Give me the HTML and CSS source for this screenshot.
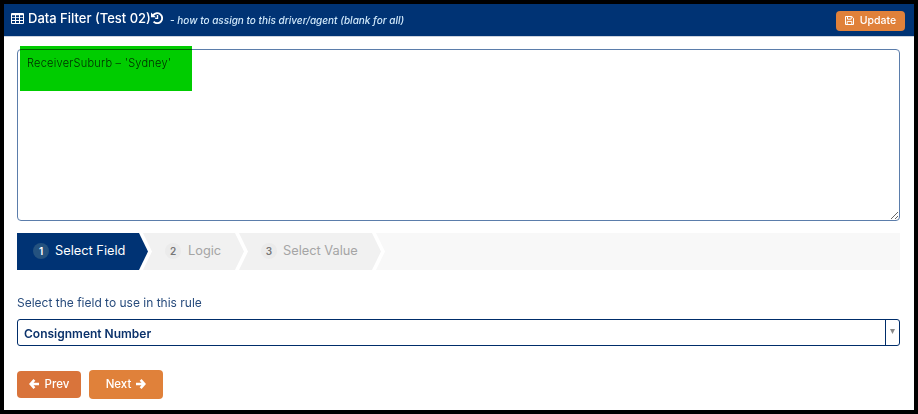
FILE: index.html
```html
<!DOCTYPE html>
<html lang="en">
<head>
<meta charset="utf-8">
<title>Data Filter</title>
<link rel="stylesheet" href="styles.css">
</head>
<body>
<main class="panel">
  <header class="bar">
    <svg class="icon-table" viewBox="0 0 13 11"><path fill="#fff" fill-rule="evenodd" d="M1 0h11a1 1 0 0 1 1 1v9a1 1 0 0 1-1 1H1a1 1 0 0 1-1-1V1a1 1 0 0 1 1-1zM1 2.2v2h3v-2zM5 2.2v2h3v-2zM9 2.2v2h3v-2zM1 5.1v2h3v-2zM5 5.1v2h3v-2zM9 5.1v2h3v-2zM1 8v2h3V8zM5 8v2h3V8zM9 8v2h3V8z"/></svg>
    <h1 class="title">Data Filter (Test 02)</h1>
    <svg class="icon-history" viewBox="0 0 12 12" fill="none" stroke="#fff"><path stroke-width="1.9" d="M2.2 3.1A5 5 0 1 1 2.6 9.7"/><path fill="#fff" stroke="none" d="M0 .5V5.2h4.9z"/><path stroke-width="1.4" d="M6.5 3v3.4H4.2"/></svg>
    <span class="hint">- how to assign to this driver/agent (blank for all)</span>
    <button class="btn update"><svg class="icon-save" viewBox="0 0 9 9" fill="none" stroke="#fff"><path d="M.5.5h6.3l1.7 1.7v6.3h-8z"/><path d="M2.5.5v2.7h3.7V.5M2.2 8.5V5.4h4.6v3.1"/></svg><span>Update</span></button>
  </header>
  <div class="content">
    <div class="editor">
      <textarea class="rule" spellcheck="false">ReceiverSuburb – 'Sydney'</textarea>
      <div class="mark"></div>
    </div>
    <ol class="steps">
      <li class="step active"><b class="num">1</b><span>Select Field</span></li>
      <li class="step logic"><b class="num">2</b><span>Logic</span></li>
      <li class="step value"><b class="num">3</b><span>Select Value</span></li>
    </ol>
    <div class="label">Select the field to use in this rule</div>
    <div class="select"><span class="chosen">Consignment Number</span><span class="toggle"><i class="caret"></i></span></div>
    <div class="actions">
      <button class="btn prev"><svg class="arrow" viewBox="0 0 10 10" fill="none" stroke="#fff" stroke-width="2.6"><path d="M5.4.9 1.7 5l3.7 4.1M1.8 5H10"/></svg><span>Prev</span></button>
      <button class="btn next"><span>Next</span><svg class="arrow" viewBox="0 0 10 10" fill="none" stroke="#fff" stroke-width="2.6"><path d="M4.6.9 8.3 5 4.6 9.1M8.2 5H0"/></svg></button>
    </div>
  </div>
</main>
</body>
</html>
```
FILE: styles.css
```css
* { box-sizing: border-box; }
body { margin: 0; background: #000; font-family: Inter, "Liberation Sans", sans-serif; }
.panel { height: 414px; border: 4px solid #000; background: #fff; }
.bar { display: flex; align-items: center; height: 33px; padding: 0 9px 0 7px; background: #003374; border-bottom: 1px solid #ccd3de; color: #fff; white-space: nowrap; }
.icon-table { flex: none; width: 13px; height: 11px; margin: -4px 4px 0 0; }
.title { flex: none; margin: -4px 0 0; font-size: 13px; font-weight: 500; line-height: 20px; width: 123px; }
.icon-history { flex: none; width: 12px; height: 12px; margin-top: -4px; }
.hint { margin: 0 0 0 7px; font-size: 10px; line-height: 12px; font-style: italic; font-weight: 500; color: #cfe8fa; }
.btn { display: flex; align-items: center; justify-content: center; padding: 0; border: 0; border-radius: 4px; background: #e0813a; color: #fff; font-family: inherit; font-size: 11.5px; font-weight: 500; }
.update { width: 69px; height: 20px; margin: 1px 0 0 auto; gap: 6px; font-size: 10.5px; }
.icon-save { width: 9px; height: 9px; }
.content { padding: 12px 14px 0 13px; }
.editor { position: relative; height: 172px; }
.rule { display: block; width: 100%; height: 172px; margin: 0; padding: 5px 9px; border: 1px solid #5b7dab; border-radius: 4px; outline: 0; background: #fff; color: #26384f; font: 300 11px/17px Inter, sans-serif; letter-spacing: 0.25px; }
.mark { position: absolute; left: 3px; top: -3px; width: 172px; height: 45px; background: #00cc00; mix-blend-mode: multiply; }
.steps { display: flex; height: 37px; margin: 12px 0 0; padding: 0; list-style: none; background: #fff; }
.steps::after { content: ""; flex: 1; margin-left: -5px; background: #f8f8f8; clip-path: polygon(0 0, 100% 0, 100% 100%, 0 100%, 9px 50%); }
.step { display: flex; align-items: center; gap: 6px; height: 37px; padding: 0 0 2px 22px; margin-left: -5px; background: #f1f1f1; color: #a5a5a5; font-size: 12.8px; clip-path: polygon(0 0, calc(100% - 9px) 0, 100% 50%, calc(100% - 9px) 100%, 0 100%, 9px 50%); }
.step span { margin-top: -1px; }
.active { width: 131px; margin-left: 0; padding-left: 16px; background: #003374; color: #fff; clip-path: polygon(0 0, calc(100% - 9px) 0, 100% 50%, calc(100% - 9px) 100%, 0 100%); }
.logic { width: 101px; gap: 7px; }
.value { width: 142px; }
.num { width: 16px; height: 16px; border-radius: 50%; background: #ebebeb; color: #777; font-size: 10px; font-weight: 600; line-height: 16px; text-align: center; }
.active .num { background: #24527f; color: #fff; }
.label { margin-top: 24px; height: 18px; color: #274b7c; font-size: 12px; line-height: 18px; }
.select { display: flex; height: 27px; margin-top: 7px; border: 1px solid #002d6a; border-radius: 3px; }
.chosen { flex: 1; padding: 1px 6px; color: #0b326b; font-size: 12px; font-weight: 600; line-height: 26px; }
.toggle { width: 14px; padding: 9px 0 0 4px; border-left: 1px solid #002d6a; }
.caret { display: block; width: 5px; height: 5px; background: #888; clip-path: polygon(0 0, 100% 0, 50% 100%); }
.actions { display: flex; align-items: center; gap: 8px; margin-top: 24px; }
.btn span { margin-top: -1px; }
.prev { width: 64px; height: 27px; gap: 6px; background: #d9743b; }
.next { width: 74px; height: 29px; gap: 5px; }
.arrow { width: 10px; height: 10px; margin-top: -1px; }
```
